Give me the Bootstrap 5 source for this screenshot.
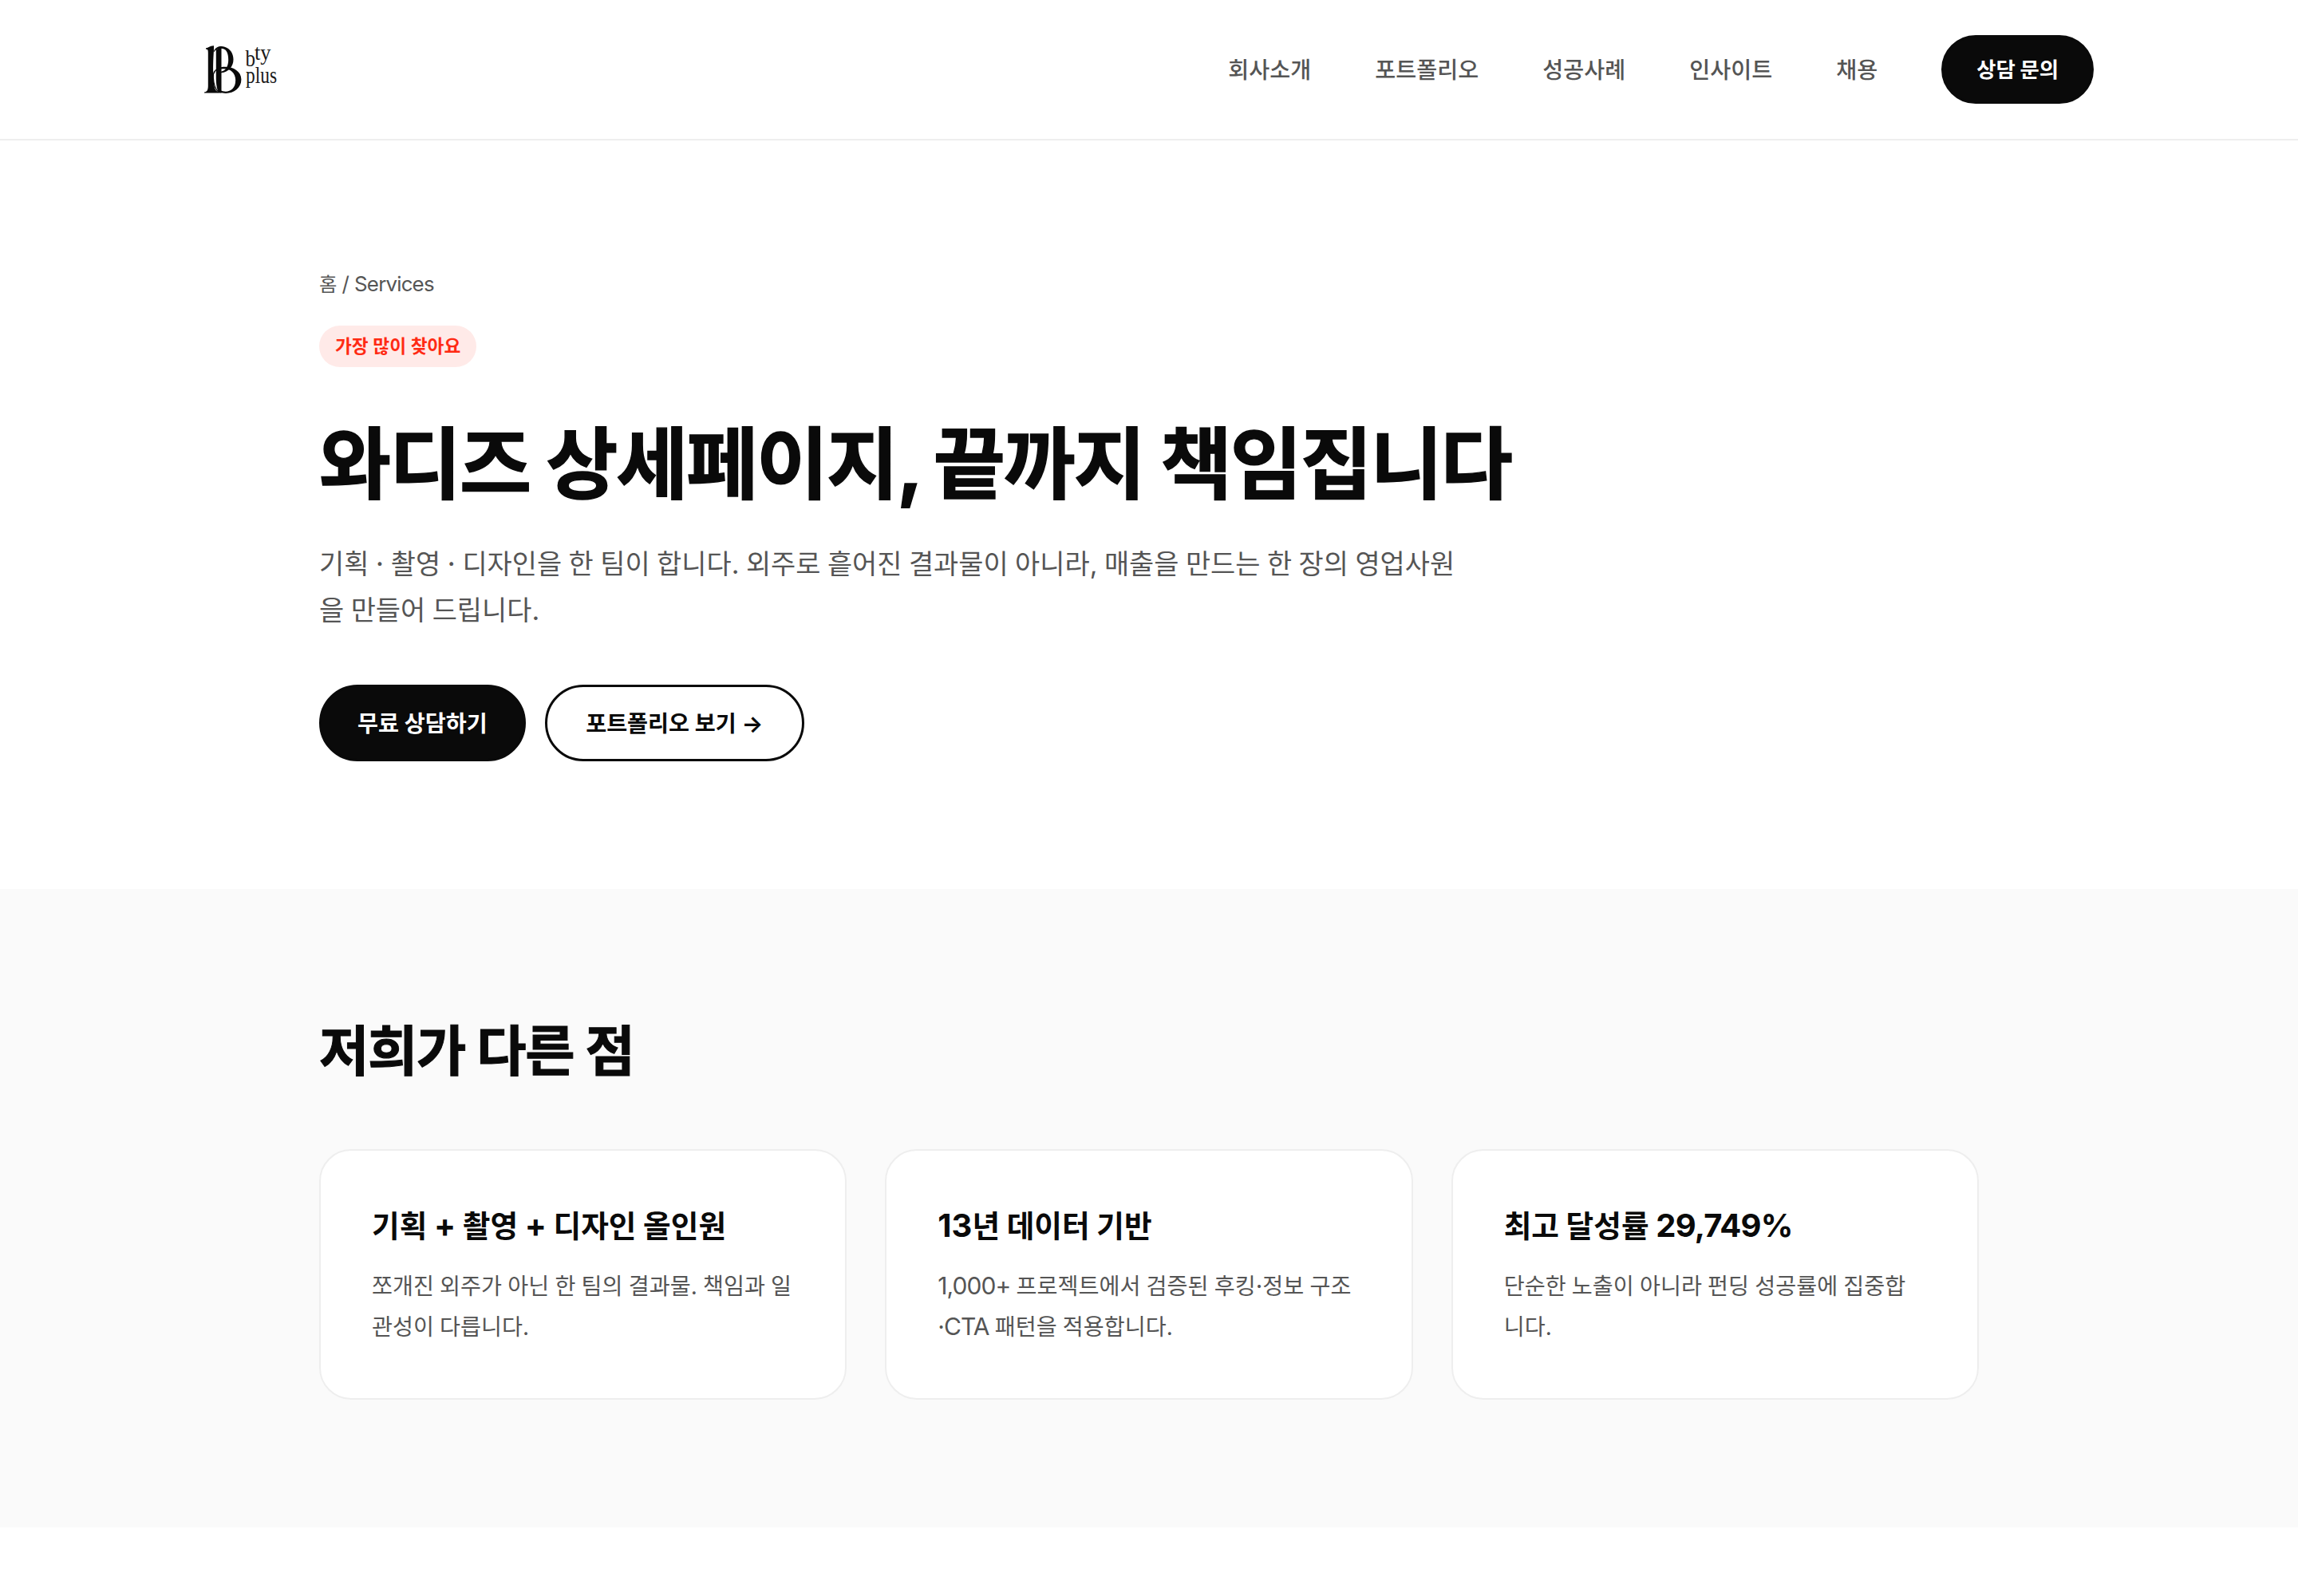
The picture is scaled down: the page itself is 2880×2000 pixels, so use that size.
<!DOCTYPE html>
<html lang="ko">
<head>
<meta charset="utf-8">
<meta name="viewport" content="width=device-width, initial-scale=1">
<title>와디즈 상세페이지 | bty plus</title>
<link href="https://cdn.jsdelivr.net/npm/bootstrap@5.3.0/dist/css/bootstrap.min.css" rel="stylesheet">
<style>
  :root { --ink: #0a0a0a; --soft: #555; --line: #eee; }
  body { font-family: Inter, "Noto Sans CJK KR", sans-serif; color: var(--ink); background: #fff; word-spacing: -.02em; }
  /* Latin runs sit slightly larger than the Hangul around them */
  .lat { font-size: 1.062em; letter-spacing: -.032em; line-height: 1; white-space: nowrap; }
  .dot { font-size: 1.062em; line-height: 1; }
  .site-header { height: 176px; border-bottom: 2px solid var(--line); }
  .site-header .inner { width: 2368px; }
  .site-header svg { overflow: visible; }
  .site-nav { gap: 80px; font-size: 28.25px; line-height: 48px; font-weight: 500; }
  .site-nav a { color: var(--soft); text-decoration: none; }
  .site-nav a:not(.btn) { padding-top: 2px; }
  .pill { --bs-btn-border-radius: 999px; --bs-btn-border-width: 3px; --bs-btn-font-size: 28.25px; --bs-btn-line-height: 48px;
    --bs-btn-padding-x: 48.5px; --bs-btn-padding-y: 21px; --bs-btn-font-weight: 700; --bs-btn-border-color: var(--ink); --bs-btn-color: var(--ink);
    white-space: nowrap; word-spacing: 0; padding-top: 22px; padding-bottom: 20px; }
  .pill-dark { --bs-btn-bg: var(--ink); --bs-btn-color: #fff; --bs-btn-padding-x: 45px; }
  .pill-nav { --bs-btn-font-size: 26.4px; --bs-btn-line-height: 44px; --bs-btn-padding-x: 41px; padding-top: 18px; padding-bottom: 18px; word-spacing: -.02em; }
  .wrap { width: 2080px; }
  .hero { padding: 160px 0; }
  .crumbs { font-size: 24.4px; line-height: 39px; color: var(--soft); padding-top: 1px; margin-bottom: 32px; word-spacing: -.03em; }
  .tag { height: 52px; padding: 0 20px; border-radius: 26px; background: #ffeae8; color: #ff2a14; font-size: 22.7px; font-weight: 700; word-spacing: .01em; }
  .hero h1 { font-size: 98px; line-height: 125px; font-weight: 700; letter-spacing: -2.2px; word-spacing: -.7px; margin: 59px 0 34px; -webkit-text-stroke: 1.4px var(--ink); }
  .hero h1 .comma { font-size: 100px; line-height: 1; letter-spacing: -8px; }
  .summary { font-size: 33.9px; line-height: 58px; color: var(--soft); width: 1440px; margin-bottom: 64px; word-break: break-all; word-spacing: -.031em; }
  .points { background: #fafafa; padding: 160px 0; }
  .points h2 { font-size: 67.8px; line-height: 86px; font-weight: 700; letter-spacing: -1.4px; word-spacing: -.3px; margin-bottom: 80px; -webkit-text-stroke: 1px var(--ink); }
  .points .row { --bs-gutter-x: 48px; }
  .point { height: 314px; padding: 64px; border: 2px solid var(--line); border-radius: 40px; background: #fff; }
  .point h3 { font-size: 37.7px; line-height: 60px; font-weight: 700; margin-bottom: 21px; }
  .point h3 .lat { letter-spacing: -.02em; }
  .point p { font-size: 28.25px; line-height: 51px; color: var(--soft); word-break: break-all; word-spacing: -.028em; }
</style>
</head>
<body>
<header class="site-header d-flex align-items-center justify-content-center">
  <div class="inner d-flex align-items-center justify-content-between">
    <a href="#" class="d-block lh-1" aria-label="bty plus">
      <svg width="96" height="70" viewBox="256 52 96 70" fill="#0a0a0a">
        <path d="M258 60.200C261 60.400 262.500 57.500 268 57.300V62C267.300 75 266.600 85 267.600 97C268 106 268.500 114.500 274 115V116.600H256V115.500C259.500 115 260.600 113 260.800 108V66C260.800 62.500 260.300 61.800 258 61.500Z"/>
        <path d="M270.800 62L277.500 59.500V116.600H274.500C271.300 112 270.800 104 270.800 96Z"/>
        <path d="M268 64C270 58.500 277 56.800 281.500 58.800C288.500 61 292.500 67 292.500 74.500C292.500 83 287 90.500 277 91.200V89.800C283.500 88.500 286.200 82 286.200 75C286.200 66 283.500 60.800 277 60.800C273 60.800 270 62 268 65.500Z"/>
        <path d="M277 84.300C289 82 302.400 88 302.400 99.500C302.400 110.500 293 116.900 283 116.900C280 116.900 278 116.300 276 116V113C284 117 295.200 114 295.200 100.500C295.200 90 287 84.800 277 86.500Z"/>
        <path d="M277.500 84.800C270 86 266.800 90 267.300 97C267.600 104 269.500 112 274.500 116" fill="none" stroke="#0a0a0a" stroke-width="1.200"/>
        <g font-family="Liberation Serif, serif" fill="#1a1a1a">
          <text x="307.500" y="82.800" font-size="29" textLength="12.500" lengthAdjust="spacingAndGlyphs">b</text>
          <text x="319" y="75" font-size="27" textLength="20.500" lengthAdjust="spacingAndGlyphs">ty</text>
          <text x="308" y="103.800" font-size="29.500" textLength="39" lengthAdjust="spacingAndGlyphs">plus</text>
        </g>
      </svg>
    </a>
    <nav class="site-nav d-flex align-items-center">
      <a href="#">회사소개</a>
      <a href="#">포트폴리오</a>
      <a href="#">성공사례</a>
      <a href="#">인사이트</a>
      <a href="#">채용</a>
      <a href="#" class="btn pill pill-dark pill-nav text-white">상담 문의</a>
    </nav>
  </div>
</header>
<main>
  <section class="hero">
    <div class="wrap mx-auto">
      <div class="crumbs">홈 <span class="dot">/</span> <span class="lat">Services</span></div>
      <div class="d-flex"><span class="tag d-inline-flex align-items-center">가장 많이 찾아요</span></div>
      <h1>와디즈 상세페이지<span class="comma">,</span> 끝까지 책임집니다</h1>
      <p class="summary">기획 <span class="dot">·</span> 촬영 <span class="dot">·</span> 디자인을 한 팀이 합니다. 외주로 흩어진 결과물이 아니라, 매출을 만드는 한 장의 영업사원을 만들어 드립니다.</p>
      <div class="d-flex gap-4">
        <a href="#" class="btn pill pill-dark">무료 상담하기</a>
        <a href="#" class="btn pill">포트폴리오 보기 →</a>
      </div>
    </div>
  </section>
  <section class="points">
    <div class="wrap mx-auto">
      <h2>저희가 다른 점</h2>
      <div class="row">
        <div class="col-4"><div class="point">
          <h3>기획 <span class="dot">+</span> 촬영 <span class="dot">+</span> 디자인 올인원</h3>
          <p class="mb-0">쪼개진 외주가 아닌 한 팀의 결과물. 책임과 일관성이 다릅니다.</p>
        </div></div>
        <div class="col-4"><div class="point">
          <h3><span class="dot">13</span>년 데이터 기반</h3>
          <p class="mb-0"><span class="lat">1,000+</span> 프로젝트에서 검증된 후킹<span class="dot">·</span>정보 구조<wbr><span class="lat">·CTA</span> 패턴을 적용합니다.</p>
        </div></div>
        <div class="col-4"><div class="point">
          <h3>최고 달성률 <span class="lat">29,749%</span></h3>
          <p class="mb-0">단순한 노출이 아니라 펀딩 성공률에 집중합<wbr><span class="text-nowrap">니다.</span></p>
        </div></div>
      </div>
    </div>
  </section>
</main>
<script src="https://cdn.jsdelivr.net/npm/bootstrap@5.3.0/dist/js/bootstrap.bundle.min.js"></script>
</body>
</html>
